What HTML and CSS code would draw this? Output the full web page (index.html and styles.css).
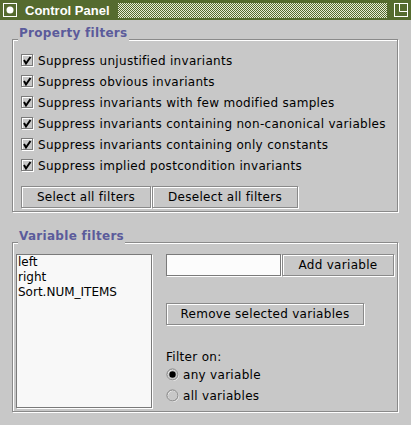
FILE: index.html
```html
<!DOCTYPE html>
<html>
<head>
<meta charset="utf-8">
<title>Control Panel</title>
<link rel="stylesheet" href="styles.css">
</head>
<body>
<div class="titlebar">
  <svg class="tb-menu" width="14" height="14" viewBox="0 0 14 14"><rect x="0.5" y="0.5" width="13" height="13" fill="none" stroke="#fff"/><circle cx="7" cy="7" r="3.5" fill="#fff"/></svg>
  <span class="tb-title">Control Panel</span>
  <svg class="tb-grip" preserveAspectRatio="none"><defs><pattern id="chk" width="2" height="2" patternUnits="userSpaceOnUse"><rect width="2" height="2" fill="#556b2f"/><rect width="1" height="1" fill="#e8ecd8"/><rect x="1" y="1" width="1" height="1" fill="#e8ecd8"/></pattern></defs><rect width="100%" height="100%" fill="url(#chk)" shape-rendering="crispEdges"/></svg>
  <svg class="tb-max" width="14" height="14" viewBox="0 0 14 14"><rect x="0.5" y="0.5" width="13" height="13" fill="none" stroke="#fff"/><path d="M5.5 0.5 V8.5 H13.5" fill="none" stroke="#fff"/></svg>
</div>
<div class="content">
  <section class="group">
    <div class="group-title">Property filters</div>
    <div class="group-box props-box">
      <ul class="checks">
        <li class="check"><svg class="cb" width="13" height="13" viewBox="0 0 13 13"><rect x="1.5" y="1.5" width="11" height="11" fill="none" stroke="#fff"/><rect x="0.5" y="0.5" width="11" height="11" fill="none" stroke="#7a7a7a"/><path d="M3 6 L5 9.5 L9.5 3" fill="none" stroke="#000" stroke-width="2"/></svg><span>Suppress unjustified invariants</span></li>
        <li class="check"><svg class="cb" width="13" height="13" viewBox="0 0 13 13"><rect x="1.5" y="1.5" width="11" height="11" fill="none" stroke="#fff"/><rect x="0.5" y="0.5" width="11" height="11" fill="none" stroke="#7a7a7a"/><path d="M3 6 L5 9.5 L9.5 3" fill="none" stroke="#000" stroke-width="2"/></svg><span>Suppress obvious invariants</span></li>
        <li class="check"><svg class="cb" width="13" height="13" viewBox="0 0 13 13"><rect x="1.5" y="1.5" width="11" height="11" fill="none" stroke="#fff"/><rect x="0.5" y="0.5" width="11" height="11" fill="none" stroke="#7a7a7a"/><path d="M3 6 L5 9.5 L9.5 3" fill="none" stroke="#000" stroke-width="2"/></svg><span>Suppress invariants with few modified samples</span></li>
        <li class="check"><svg class="cb" width="13" height="13" viewBox="0 0 13 13"><rect x="1.5" y="1.5" width="11" height="11" fill="none" stroke="#fff"/><rect x="0.5" y="0.5" width="11" height="11" fill="none" stroke="#7a7a7a"/><path d="M3 6 L5 9.5 L9.5 3" fill="none" stroke="#000" stroke-width="2"/></svg><span>Suppress invariants containing non-canonical variables</span></li>
        <li class="check"><svg class="cb" width="13" height="13" viewBox="0 0 13 13"><rect x="1.5" y="1.5" width="11" height="11" fill="none" stroke="#fff"/><rect x="0.5" y="0.5" width="11" height="11" fill="none" stroke="#7a7a7a"/><path d="M3 6 L5 9.5 L9.5 3" fill="none" stroke="#000" stroke-width="2"/></svg><span>Suppress invariants containing only constants</span></li>
        <li class="check"><svg class="cb" width="13" height="13" viewBox="0 0 13 13"><rect x="1.5" y="1.5" width="11" height="11" fill="none" stroke="#fff"/><rect x="0.5" y="0.5" width="11" height="11" fill="none" stroke="#7a7a7a"/><path d="M3 6 L5 9.5 L9.5 3" fill="none" stroke="#000" stroke-width="2"/></svg><span>Suppress implied postcondition invariants</span></li>
      </ul>
      <div class="btn-row">
        <button class="btn btn-select">Select all filters</button><button class="btn btn-deselect">Deselect all filters</button>
      </div>
    </div>
  </section>
  <section class="group">
    <div class="group-title">Variable filters</div>
    <div class="group-box vars-box">
      <ul class="varlist">
        <li>left</li>
        <li>right</li>
        <li>Sort.NUM_ITEMS</li>
      </ul>
      <div class="varside">
        <div class="add-row">
          <input class="varfield" type="text" value="">
          <button class="btn btn-add">Add variable</button>
        </div>
        <button class="btn btn-remove">Remove selected variables</button>
        <div class="filter-label">Filter on:</div>
        <div class="radio"><svg width="13" height="13" viewBox="0 0 13 13"><circle cx="7" cy="7" r="5.5" fill="none" stroke="#fff"/><circle cx="6.5" cy="6.5" r="5.5" fill="none" stroke="#7a7a7a"/><circle cx="6.5" cy="6.5" r="3.2" fill="#000"/></svg><span>any variable</span></div>
        <div class="radio"><svg width="13" height="13" viewBox="0 0 13 13"><circle cx="7" cy="7" r="5.5" fill="none" stroke="#fff"/><circle cx="6.5" cy="6.5" r="5.5" fill="none" stroke="#7a7a7a"/></svg><span>all variables</span></div>
      </div>
    </div>
  </section>
</div>
</body>
</html>
```
FILE: styles.css
```css
* { box-sizing: border-box; }
html, body { margin: 0; padding: 0; }
body {
  width: 411px;
  height: 425px;
  overflow: hidden;
  background: #c8c8c8;
  font-family: "DejaVu Sans", sans-serif;
  font-size: 12px;
  color: #000;
}
.titlebar {
  height: 20px;
  background: #556b2f;
  display: flex;
  align-items: center;
}
.tb-menu { display: block; flex: none; margin-left: 3px; }
.tb-title {
  margin-left: 8px;
  font-family: "Liberation Sans", Arial, sans-serif;
  font-weight: bold;
  font-size: 13px;
  color: #fff;
  white-space: nowrap;
}
.tb-grip { display: block; flex: 1; height: 15px; margin: 0 7px 0 8px; }
.tb-max { display: block; flex: none; margin-right: 3px; }

.content { padding: 0 13px 0 12px; }
.group { margin-top: 5px; }
.group + .group { margin-top: 16px; }
.group-title {
  position: relative;
  z-index: 1;
  width: max-content;
  margin-left: 6px;
  padding: 0 1px;
  height: 16px;
  line-height: 16px;
  background: #c8c8c8;
  color: #5b5b9b;
  font-weight: bold;
  letter-spacing: 0.3px;
}
.group-box {
  margin-top: -2px;
  border: 1px solid #8a8a8a;
  box-shadow: inset 1px 1px 0 #fff, 1px 1px 0 #fff;
}
.props-box { padding: 10px 0 2px 8px; }
.checks { list-style: none; margin: 0; padding: 0; }
.check {
  height: 21px;
  display: flex;
  align-items: center;
  gap: 4px;
  letter-spacing: 0.3px;
  white-space: nowrap;
}
.cb { display: block; flex: none; }
.btn-row { display: flex; margin-top: 10px; }
.btn {
  height: 22px;
  margin: 0 1px 1px 0;
  padding: 0;
  border: 1px solid #8a8a8a;
  box-shadow: inset 1px 1px 0 #fff, 1px 1px 0 #fff;
  background: #c8c8c8;
  font: inherit;
  letter-spacing: 0.3px;
  color: #000;
  border-radius: 0;
}
.btn-select { width: 130px; }
.btn-deselect { width: 146px; }

.vars-box { display: flex; align-items: flex-start; padding: 11px 0 3px 3px; }
.varlist {
  list-style: none;
  margin: 0 14px 0 0;
  padding: 0 0 0 1px;
  width: 136px;
  height: 154px;
  flex: none;
  background: #f8f8f8;
  border: 1px solid #7a7a7a;
  box-shadow: 1px 1px 0 #fff;
  line-height: 15px;
}
.varside { display: flex; flex-direction: column; align-items: flex-start; }
.add-row { display: flex; }
.varfield {
  width: 115px;
  height: 22px;
  margin: 0 1px 1px 0;
  padding: 0 2px;
  border: 1px solid #7a7a7a;
  box-shadow: 1px 1px 0 #fff;
  background: #fcfcfc;
  font: inherit;
  border-radius: 0;
  outline: none;
}
.btn-add { width: 112px; }
.btn-remove { width: 198px; margin-top: 26px; }
.filter-label { margin-top: 24px; line-height: 14px; letter-spacing: 0.3px; }
.radio {
  height: 21px;
  display: flex;
  align-items: center;
  gap: 4px;
  letter-spacing: 0.3px;
}
.radio svg { display: block; flex: none; }
```
